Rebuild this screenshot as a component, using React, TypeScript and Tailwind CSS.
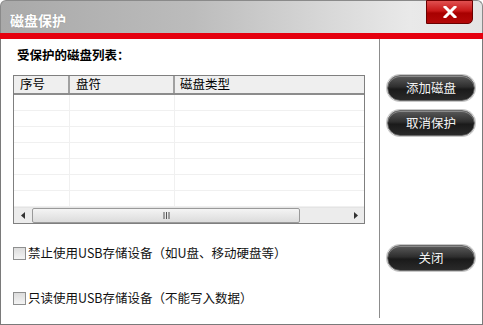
import React from "react";

const font = { fontFamily: '"Noto Sans CJK SC", "Noto Sans", sans-serif' };

function PillButton({ label }: { label: string }) {
  return (
    <div className="w-[88px] h-[26px] rounded-full border border-[#6a6a6a] bg-[linear-gradient(to_bottom,#5a5a5a_0%,#2e2e2e_45%,#1a1a1a_55%,#2a2a2a_100%)] shadow-[inset_0_1px_0_#8a8a8a,0_0_0_1px_#c8c8c8] flex items-center justify-center">
      <span className="text-[#f4f4f4] text-[12.5px] leading-none" style={font}>{label}</span>
    </div>
  );
}

function Checkbox({ label }: { label: string }) {
  return (
    <div className="flex items-center gap-[2px]">
      <div className="w-[13px] h-[13px] border border-[#8e8f8f] bg-[linear-gradient(to_bottom,#dcdcdc,#f4f4f4)]" />
      <span className="text-[12.5px] text-[#111] leading-none" style={font}>{label}</span>
    </div>
  );
}

export default function App() {
  const rows = Array.from({ length: 7 });
  return (
    <div className="w-[483px] h-[325px] bg-white relative overflow-hidden" style={font}>
      {/* Title bar */}
      <div className="h-[33px] rounded-t-[6px] border border-b-0 border-[#8a8a8a] bg-[linear-gradient(to_right,#a9a9a9_0%,#bcbcbc_40%,#e9e9e9_85%,#e4e4e4_100%)] flex items-center pl-[9px] relative">
        <span className="text-white text-[14px] font-bold leading-none mt-[5px] [text-shadow:0_0_1px_#888]" style={font}>磁盘保护</span>
        <div className="absolute top-[-1px] right-[9px] w-[47px] h-[24px] rounded-br-[5px] border border-[#6a0000] bg-[linear-gradient(to_bottom,#e05050_0%,#c81818_45%,#a80000_55%,#b40808_100%)] flex items-center justify-center">
          <svg width="14" height="12" viewBox="0 0 14 12">
            <path d="M2 1 L12 11 M12 1 L2 11" stroke="white" strokeWidth="3" strokeLinecap="square" />
          </svg>
        </div>
      </div>
      {/* red band */}
      <div className="h-[6px] bg-[#e5000f]" />
      {/* body */}
      <div className="h-[286px] flex border-l border-r border-b border-[#7a7a7a]">
        <div className="w-[378px] pl-[12px] pt-[8px] flex flex-col">
          <div className="pl-[4px] text-[12.5px] font-bold text-black leading-[16px]">受保护的磁盘列表：</div>
          <div className="mt-[12px] w-[352px] h-[149px] border border-[#7f7f7f] flex flex-col bg-white">
            <div className="h-[19px] flex border-b-2 border-[#8c8c8c] bg-[#efefef] text-[12.5px] text-black leading-none">
              <div className="w-[56px] pl-[6px] flex items-center border-r-2 border-[#a0a0a0]">序号</div>
              <div className="w-[105px] pl-[6px] flex items-center border-r-2 border-[#a0a0a0]">盘符</div>
              <div className="flex-1 pl-[5px] flex items-center">磁盘类型</div>
            </div>
            <div className="flex-1 flex flex-col">
              {rows.map((_, i) => (
                <div key={i} className="h-[16px] flex border-b border-[#f0f0f0]">
                  <div className="w-[56px] border-r border-[#f0f0f0]" />
                  <div className="w-[105px] border-r border-[#f0f0f0]" />
                  <div className="flex-1" />
                </div>
              ))}
            </div>
            <div className="h-[16px] flex items-center bg-[#ececec] border-t border-[#e4e4e4]">
              <div className="w-[18px] flex items-center justify-center">
                <svg width="5" height="7" viewBox="0 0 5 7"><path d="M4 0 L0 3.5 L4 7 Z" fill="#333" /></svg>
              </div>
              <div className="w-[268px] h-[15px] border border-[#9a9a9a] rounded-[2px] bg-[linear-gradient(to_bottom,#f4f4f4,#dcdcdc)] flex items-center justify-center">
                <svg width="7" height="7" viewBox="0 0 7 7"><path d="M1 0 V7 M3.5 0 V7 M6 0 V7" stroke="#555" strokeWidth="1" /></svg>
              </div>
              <div className="flex-1 flex items-center justify-end pr-[6px]">
                <svg width="5" height="7" viewBox="0 0 5 7"><path d="M1 0 L5 3.5 L1 7 Z" fill="#333" /></svg>
              </div>
            </div>
          </div>
          <div className="mt-[23px]"><Checkbox label="禁止使用USB存储设备（如U盘、移动硬盘等）" /></div>
          <div className="mt-[32px]"><Checkbox label="只读使用USB存储设备（不能写入数据）" /></div>
        </div>
        <div className="w-px h-[279px] bg-[#8c8c8c]" />
        <div className="flex-1 flex flex-col items-center pt-[36px]">
          <PillButton label="添加磁盘" />
          <div className="h-[9px]" />
          <PillButton label="取消保护" />
          <div className="h-[109px]" />
          <PillButton label="关闭" />
        </div>
      </div>
    </div>
  );
}
